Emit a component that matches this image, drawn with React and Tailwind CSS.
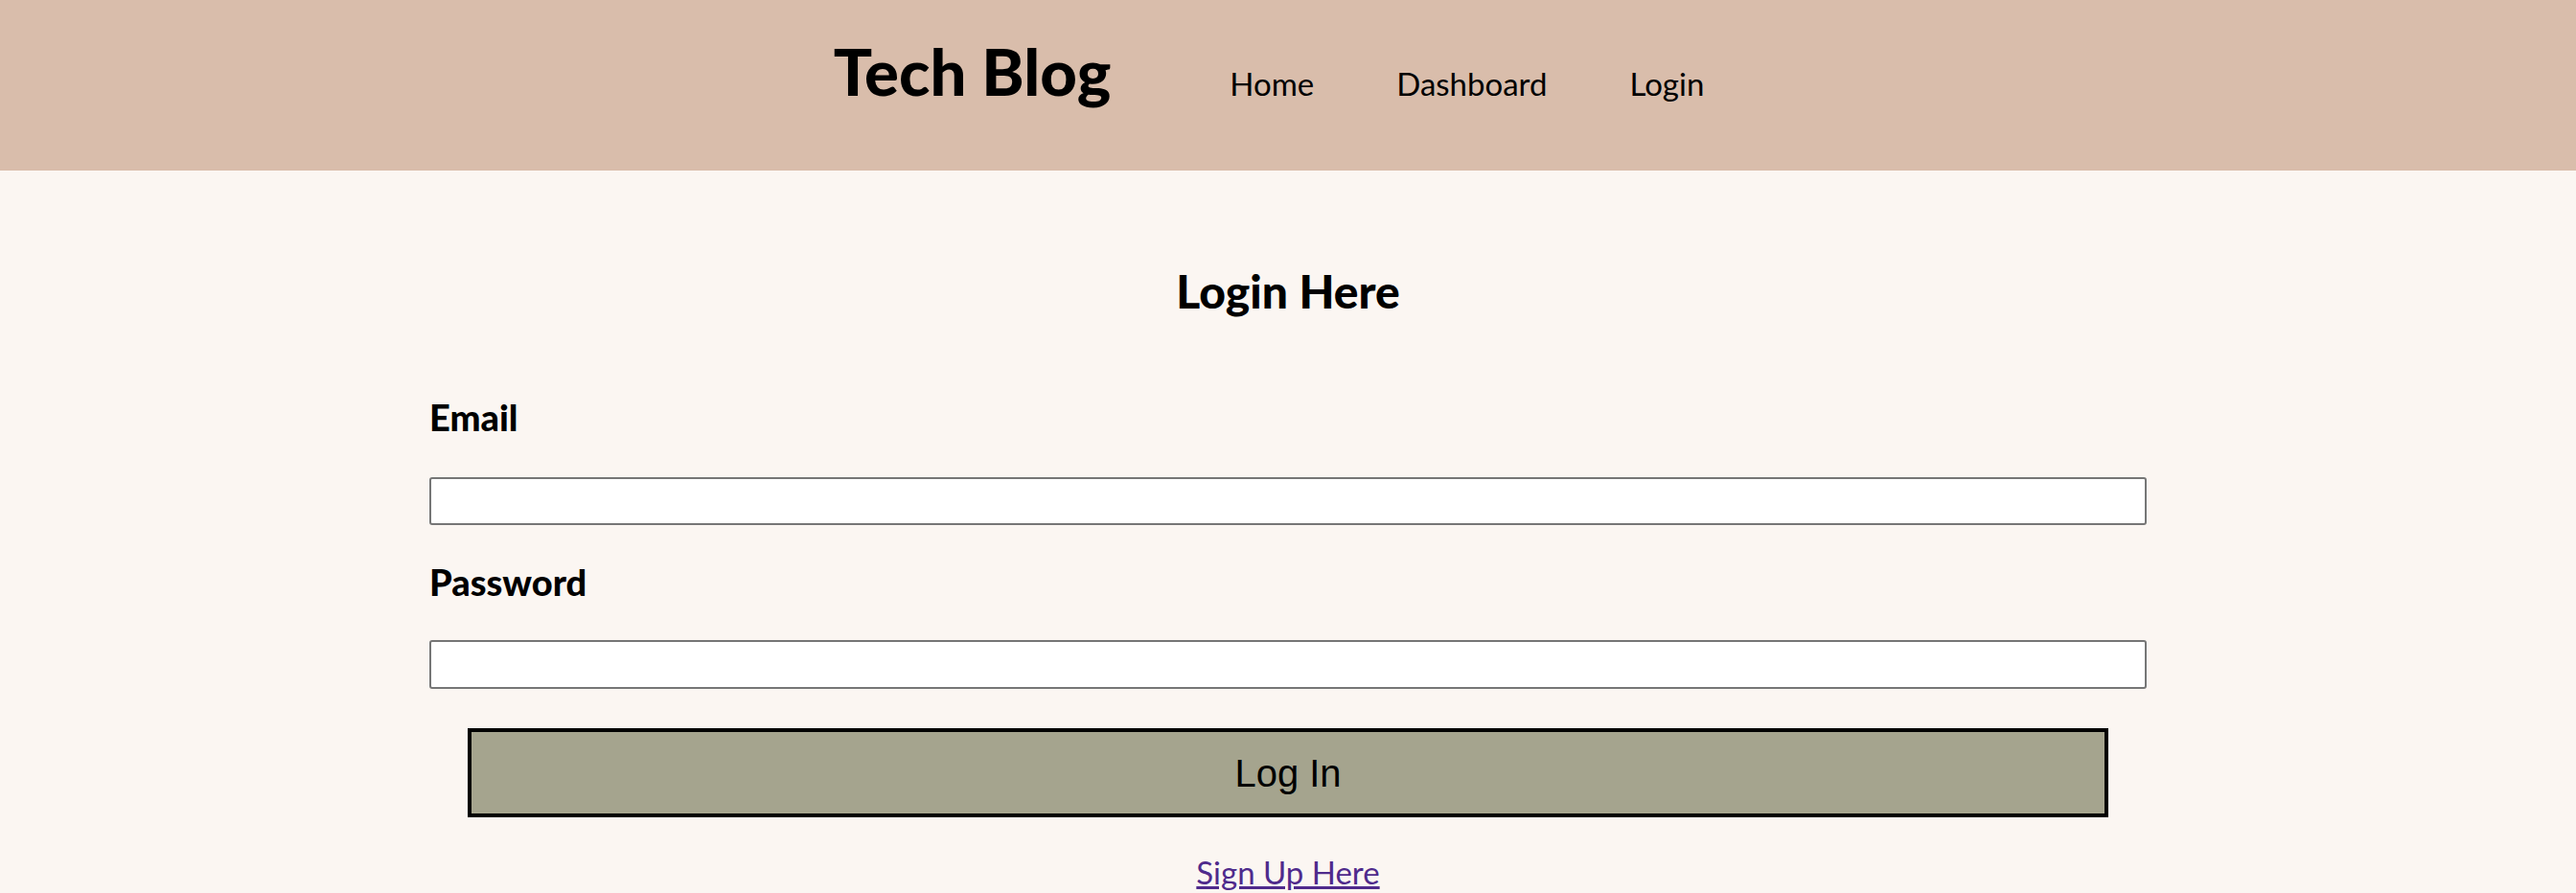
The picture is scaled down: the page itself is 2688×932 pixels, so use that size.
export default function App() {
  return (
    <div className="min-h-screen bg-[#fbf6f2]" style={{ fontFamily: 'Lato, "Noto Sans", sans-serif' }}>
      {/* Header */}
      <header className="h-[178px] bg-[#d9bdab] flex items-baseline justify-center pt-[41px] pr-[40px]">
        <h1 className="text-[67px] leading-none font-black text-black">Tech Blog</h1>
        <nav className="flex items-baseline gap-[86px] ml-[124px]">
          <a className="text-[33px] leading-none text-black">Home</a>
          <a className="text-[33px] leading-none text-black">Dashboard</a>
          <a className="text-[33px] leading-none text-black">Login</a>
        </nav>
      </header>

      {/* Login form */}
      <main className="pt-[102px] pb-10">
        <h2 className="text-[48px] leading-none font-black text-center text-black">Login Here</h2>
        <form className="w-2/3 mx-auto flex flex-col" onSubmit={e => e.preventDefault()}>
          <label className="mt-[88px] text-[38px] leading-none font-black text-black">Email</label>
          <input type="email" className="mt-[44px] h-[50px] bg-white border-2 border-[#767676] rounded-[3px]" />
          <label className="mt-[40px] text-[38px] leading-none font-black text-black">Password</label>
          <input type="password" className="mt-[42px] h-[51px] bg-white border-2 border-[#767676] rounded-[3px]" />
          <button
            type="submit"
            className="mt-[41px] mx-[40px] h-[93px] border-4 border-black bg-[#a5a48e] text-[40px] text-black"
            style={{ fontFamily: '"Liberation Sans", Arial, sans-serif' }}
          >
            Log In
          </button>
          <a className="mt-[41px] self-center text-[33px] leading-none text-[#4f2a8c] underline">Sign Up Here</a>
        </form>
      </main>
    </div>
  );
}
